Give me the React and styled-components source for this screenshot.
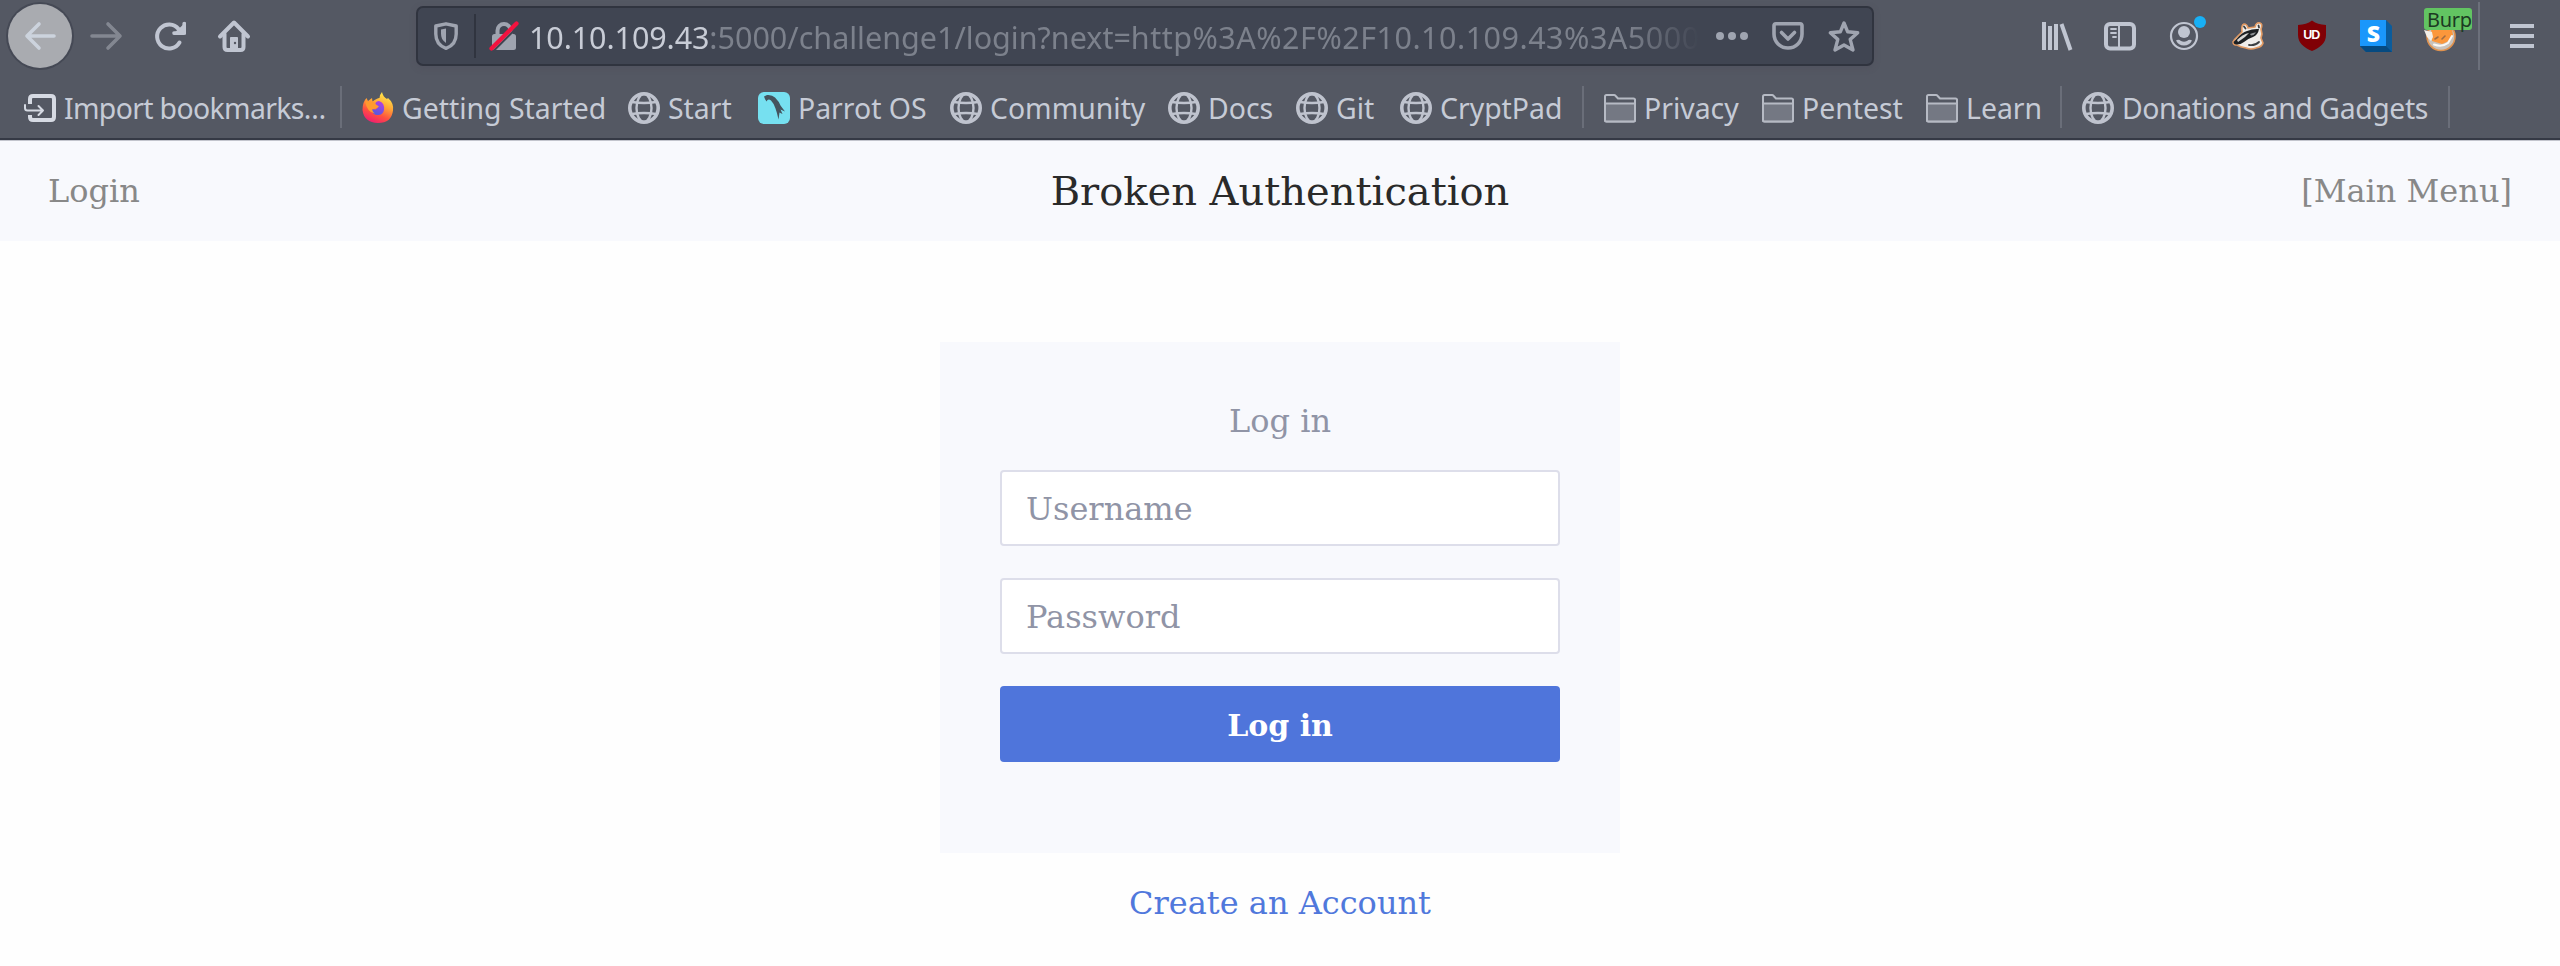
import React from "react";
import styled, { createGlobalStyle, css } from "styled-components";

const GlobalStyle = createGlobalStyle`
  * { box-sizing: border-box; }
  body { margin: 0; background: #fefefe; }
`;

const ui = '"Noto Sans", "Open Sans", sans-serif';
const serif = '"DejaVu Serif", serif';

const Window = styled.div`
  width: 2560px;
  height: 966px;
  overflow: hidden;
  display: flex;
  flex-direction: column;
  background: #fefefe;
`;

const Chrome = styled.header`
  height: 140px;
  background: #545863;
  border-bottom: 2px solid #353945;
  box-shadow: 0 1px 0 #c3c5cd;
  position: relative;
  font-family: ${ui};
  color: #c6cbd6;
`;

const Toolbar = styled.div`
  height: 72px;
  display: flex;
  align-items: center;
  padding-left: 8px;
`;

const Glyph = styled.svg`
  width: 32px;
  height: 32px;
  flex: none;
  display: block;
  overflow: visible;
  fill: none;
  stroke: currentColor;
  stroke-width: 2;
  stroke-linecap: round;
  stroke-linejoin: round;
`;

const BackButton = styled.button`
  width: 64px;
  height: 64px;
  border: 0;
  padding: 0;
  border-radius: 50%;
  background: #a9abb0;
  box-shadow: 0 0 0 2px #454955;
  color: #ccd3dd;
  display: flex;
  align-items: center;
  justify-content: center;
`;

const NavGroup = styled.div`
  display: flex;
  gap: 32px;
  margin-left: ${(p) => p.$before}px;
  color: #c0c5d1;
`;

const Dimmed = styled.div`
  color: #838791;
`;

const UrlBar = styled.div`
  width: 1458px;
  height: 60px;
  margin-left: 166px;
  display: flex;
  align-items: center;
  padding-left: 12px;
  background: #404552;
  border: 2px solid #30343f;
  border-radius: 7px;
  box-shadow: 0 2px 6px rgba(74, 66, 82, 0.25);
  color: #9fa4b0;
`;

const UrlDivider = styled.div`
  width: 2px;
  height: 44px;
  margin: 0 12px;
  background: #30343f;
`;

const UrlText = styled.div`
  width: 1171px;
  margin-left: 9px;
  padding-top: 2px;
  overflow: hidden;
  white-space: nowrap;
  font-size: 30.5px;
  line-height: 44px;
  color: #7c818c;
  mask-image: linear-gradient(to right, #000 1100px, transparent 1170px);
`;

const UrlHost = styled.span`
  color: #c8ccd6;
  letter-spacing: -0.1px;
`;

const UrlQuery = styled.span`
  letter-spacing: 0.5px;
`;

const UrlActions = styled.div`
  display: flex;
  gap: 24px;
  margin-left: 16px;
`;

const MenuDivider = styled.div`
  width: 2px;
  height: 68px;
  margin-left: 22px;
  background: #6c707b;
`;

const BadgeAnchor = styled.div`
  position: relative;
`;

const Badge = styled.span`
  position: absolute;
  left: 0;
  top: -12px;
  width: 48px;
  height: 22px;
  padding-left: 3px;
  border-radius: 3px;
  background: #62c462;
  color: #1c3a22;
  font: 20px/23px ${ui};
  letter-spacing: -0.3px;
`;

const BookmarksBar = styled.nav`
  height: 66px;
  display: flex;
  align-items: center;
  padding: 6px 0 0 24px;
  font-size: 28.4px;
  line-height: 38px;
`;

const Bookmark = styled.div`
  width: ${(p) => p.$w}px;
  flex: none;
  display: flex;
  align-items: center;
  gap: 8px;
  white-space: nowrap;
  letter-spacing: ${(p) => p.$track || 0}px;
`;

const BarDivider = styled.div`
  width: 2px;
  height: 42px;
  margin: -2px 20px 0 0;
  background: #6a6e79;
`;

const SiteHeader = styled.div`
  height: 101px;
  display: grid;
  grid-template-columns: 1fr auto 1fr;
  align-items: center;
  padding: 0 48px;
  background: #f8f9fd;
  font-family: ${serif};
`;

const SiteLink = styled.a`
  font-size: 32px;
  line-height: 40px;
  color: #888;
  justify-self: ${(p) => (p.$end ? "end" : "start")};
`;

const SiteTitle = styled.h1`
  margin: 0;
  font-size: 40px;
  line-height: 48px;
  font-weight: 400;
  color: #2a2a2a;
`;

const Main = styled.main`
  display: flex;
  flex-direction: column;
  align-items: center;
  padding-top: 101px;
  font-family: ${serif};
`;

const Card = styled.form`
  width: 680px;
  height: 511px;
  padding: 59px 60px 0;
  display: flex;
  flex-direction: column;
  background: #f8f9fd;
`;

const CardTitle = styled.h2`
  margin: 0 0 29px;
  font-size: 32px;
  line-height: 40px;
  font-weight: 400;
  text-align: center;
  color: #9094a6;
`;

const control = css`
  width: 100%;
  height: 76px;
  border-radius: 4px;
  font-family: ${serif};
`;

const Field = styled.input`
  ${control}
  margin: 0 0 32px;
  padding: 1px 24px 0;
  border: 2px solid #dddeea;
  background: #fff;
  font-size: 32px;
  &::placeholder {
    color: #9094a6;
    opacity: 1;
  }
`;

const Submit = styled.button`
  ${control}
  padding: 2px 0 0;
  border: 0;
  background: #4f75db;
  color: #fff;
  font-size: 30px;
  font-weight: 700;
`;

const AccountLink = styled.a`
  margin-top: 28px;
  font-size: 32px;
  line-height: 44px;
  color: #5078dc;
`;

const Icon = ({ children }) => <Glyph viewBox="0 0 32 32">{children}</Glyph>;

const Back = () => (
  <Icon><path d="M30 16H3M15 4 3 16l12 12" strokeWidth="3.6" /></Icon>
);
const Forward = () => (
  <Icon><path d="M2 16h27M18 4l12 12-12 12" strokeWidth="3.6" /></Icon>
);
const Reload = () => (
  <Icon>
    <path d="M25.5 22.5A12 12 0 1 1 24.5 9" strokeWidth="4" />
    <path d="M32 2v12.5H18.5z" fill="currentColor" stroke="none" />
    <path d="M30.2 3.5v9.6H20" strokeWidth="3.6" />
  </Icon>
);
const Home = () => (
  <Icon>
    <path d="M2 16.5 16 2.5l14 14" strokeWidth="4" />
    <path d="M6.5 14v13q0 3 3 3h13q3 0 3-3V14" strokeWidth="4" />
    <path d="M12.5 30V17.5h7V30z" fill="currentColor" strokeWidth="1" />
    <circle cx="17" cy="23" r="1.2" fill="#545863" stroke="none" />
  </Icon>
);
const Shield = () => (
  <Icon>
    <path d="M16 3.8 26.2 6v8c0 7-3.6 12-10.2 14.4C9.4 26 5.8 21 5.8 14V6z" strokeWidth="3.4" />
    <path d="M16 8.5v14.5c-3.6-2.3-5-5.5-5-9.5V9.5z" fill="currentColor" stroke="none" />
  </Icon>
);
const Lock = () => (
  <Icon>
    <rect x="4" y="14" width="24" height="16" rx="2.5" fill="currentColor" stroke="none" />
    <path d="M9.5 15v-4.500a6.500 6.500 0 0 1 13 0V15" strokeWidth="4" />
    <path d="M6 30.500 30 6.500" stroke="#404552" strokeWidth="2" />
    <path d="M3.500 28.500 28.500 3.500" stroke="#f3123f" strokeWidth="4.200" />
  </Icon>
);
const Dots = () => (
  <Icon>
    <g fill="currentColor" stroke="none">
      <circle cx="4" cy="16" r="4" />
      <circle cx="16" cy="16" r="4" />
      <circle cx="28" cy="16" r="4" />
    </g>
  </Icon>
);
const Pocket = () => (
  <Icon>
    <path d="M4 3.8h24q2 0 2 2V14a14 14 0 0 1-28 0V5.8q0-2 2-2z" strokeWidth="3.6" />
    <path d="m9.5 12.5 6.5 6.5 6.5-6.5" strokeWidth="3.6" />
  </Icon>
);
const Star = () => (
  <Icon>
    <path d="m16 3 3.7 8.800 10 1-7.500 6.600 2.800 10.600-9-5-9 5 2.800-10.600L2.300 12.800l10-1z" strokeWidth="3.4" />
  </Icon>
);
const Library = () => (
  <Icon>
    <g strokeLinecap="butt" strokeWidth="4">
      <path d="M4 2v28M10 6v24M16 4v26" />
      <path d="m21.500 4 9 26" />
    </g>
  </Icon>
);
const Sidebar = () => (
  <Icon>
    <rect x="2" y="4" width="28" height="24.5" rx="4" strokeWidth="4" />
    <path d="M15 4v24" strokeWidth="2" />
    <path d="M7 9h5M7 13h5M9 17h3" strokeWidth="1.8" />
  </Icon>
);
const Account = () => (
  <Icon>
    <circle cx="16" cy="16" r="13" strokeWidth="2.2" />
    <circle cx="16" cy="12" r="6" fill="currentColor" stroke="none" />
    <path d="M8 20.500c2-1.200 3.500-.5 5 .5q3 1.500 6 0c1.500-1 3-1.700 5-.5q-2.500 5-8 5t-8-5z" fill="currentColor" stroke="none" />
    <circle cx="32" cy="2" r="6" fill="#18b0f5" stroke="none" />
  </Icon>
);
const Badger = () => (
  <Icon>
    <path d="M1 22 3 19 10 12Q9 5 12 4q3 0 4 4l7-1q1-5 5-4 3 1 1 6l1 5-1 4 2 5q-1 4-7 5-5 2-10 0-6-1-9-3-4 0-4-3z" fill="#efedea" stroke="#e29a63" strokeWidth="1.6" />
    <path d="M1.500 22 4 19.500Q10 12 15 11q6-2.500 12-2-1 6-6 8-6 2-9 5-4 3-8 2.500Q1.500 24 1.500 22z" fill="#1d2023" stroke="none" />
    <path d="M5 20q6-6 12-7l-4 4-7 5z" fill="#d9d8d6" stroke="none" />
    <path d="M18 14q4-2 6-1.500-2 3-5 3z" fill="#8d9093" stroke="none" />
    <path d="m12 6.500 1.500 2M26.500 5.500l.5 2M17 25q6 1 10-3" stroke="#3b3e41" strokeWidth="1.800" />
  </Icon>
);
const UShield = () => (
  <Icon>
    <path d="M16 .5c4 3 8 4 14 4.500V15c0 8-6 12.500-14 16C8 27.500 2 23 2 15V5C8 4.500 12 3.500 16 .5z" fill="#800005" stroke="none" />
    <text x="15.2" y="19.4" textAnchor="middle" fontFamily="Liberation Sans, sans-serif" fontWeight="700" fontSize="12.5" letterSpacing="-1" fill="#fff" stroke="none">UD</text>
  </Icon>
);
const SBlock = () => (
  <Icon>
    <path d="M26 0 32 6V32H6L0 26z" fill="#0b5c9c" stroke="none" />
    <path d="M0 26h26l6 6H6z" fill="#064a80" stroke="none" />
    <path d="M0 0h26v26H0z" fill="#1a97fb" stroke="none" />
    <text x="13.3" y="21.5" textAnchor="middle" fontFamily="Open Sans, sans-serif" fontWeight="800" fontSize="23" fill="#fff" stroke="none">S</text>
  </Icon>
);
const Fox = () => (
  <Icon>
    <circle cx="17" cy="16.500" r="14" fill="#c9c3bd" stroke="#e0924e" strokeWidth="1.600" />
    <path d="M7 9h21l1 6-4 6-7 3-10-3z" fill="#fb973c" stroke="none" />
    <path d="m0 10 8 2 1 5-2 4-4-4z" fill="#f3efe9" stroke="none" />
    <path d="m11 19 3-2M18 19l3-3" stroke="#a06c42" strokeWidth="1.600" />
    <path d="M10 24.500q8 3 14-1.500l4-7" stroke="#fbf8f4" strokeWidth="2" />
  </Icon>
);
const Menu = () => (
  <Icon>
    <path d="M4 6h24M4 16h24M4 26h24" strokeWidth="4" strokeLinecap="butt" />
  </Icon>
);
const Import = () => (
  <Icon>
    <g stroke="#d6dae3">
      <path d="M6 12V7q0-3 3-3h18q3 0 3 3v18q0 3-3 3H9q-3 0-3-3v-2" strokeWidth="4" strokeLinecap="butt" />
      <path d="M1 13v3q0 2.500 2.500 2.500H19M14.500 14l4.500 4.500-4.500 4.500" strokeWidth="2" />
    </g>
  </Icon>
);
const Globe = () => (
  <Icon>
    <g stroke="#bfc3ce">
      <circle cx="16" cy="16" r="14.2" strokeWidth="3.6" />
      <ellipse cx="16" cy="16" rx="7.5" ry="14" strokeWidth="2.4" />
      <path d="M4 10q12 2 24 0M4 22q12-2 24 0" strokeWidth="2.4" />
    </g>
  </Icon>
);
const Folder = () => (
  <Icon>
    <path d="M1 4.500Q1 3 2.500 3H10q1 0 1.700 1L14 6.500h15.500Q31 6.500 31 8v20q0 1.500-1.500 1.500h-27Q1 29.500 1 28z" stroke="#b6bac4" fill="#545863" />
    <path d="M1.500 11.500h29V28.500h-29z" fill="#747883" stroke="none" />
    <path d="M1 11.500h30M1 8v20q0 1.500 1.500 1.500h27Q31 29.500 31 28V8" stroke="#b6bac4" />
  </Icon>
);
const Parrot = () => (
  <Icon>
    <rect width="32" height="32" rx="6" fill="#76e0f0" stroke="none" />
    <path d="M6 4.500 9 3q5-.5 8 2.500 4 4 5.500 8l4.500 6-4.500-2 2 4.500-3-1.500-1 7q-1.500-7-3-11-1.500-5-4.500-8-2-1.500-3.500-.5l-1 1.500Q6.500 6.500 6 4.500z" fill="#44545e" stroke="none" />
  </Icon>
);
const Firefox = () => (
  <Icon>
    <defs>
      <linearGradient id="flame" x1=".75" y1="0" x2=".3" y2="1">
        <stop offset="0" stopColor="#fff24d" />
        <stop offset=".4" stopColor="#ffa436" />
        <stop offset=".7" stopColor="#ff5040" />
        <stop offset="1" stopColor="#ee1b72" />
      </linearGradient>
      <linearGradient id="core" x1=".8" y1="0" x2=".3" y2="1">
        <stop offset="0" stopColor="#b83ee0" />
        <stop offset="1" stopColor="#4f5be0" />
      </linearGradient>
    </defs>
    <path d="M20 0q1 5 5 7l1-1q6 5 5 12.500Q29.500 31 16 31 2 30.500 .5 18 .500 10 4.500 6l1.500 3 4-3 .5 3.500Q15 6 17.500 6 18 2 20 0z" fill="url(#flame)" stroke="none" />
    <path d="M17 9q6 2 5 9-1 5-6 5-6 0-6.500-6l4 .5 2.500-2q-2-1.500-3-3.500 1-3 4-3z" fill="url(#core)" stroke="none" />
    <path d="M3 9q4 1 8 .5 2 .5 3 3l3 2-3.500 2-3.500 1q1 3 3 4-8-1-10-12.500z" fill="#ff9a2e" stroke="none" />
  </Icon>
);

export default function App() {
  return (
    <Window>
      <GlobalStyle />
      <Chrome>
        <Toolbar>
          <BackButton><Back /></BackButton>
          <NavGroup $before={18}>
            <Dimmed><Forward /></Dimmed>
            <Reload />
            <Home />
          </NavGroup>
          <UrlBar>
            <Shield />
            <UrlDivider />
            <Lock />
            <UrlText>
              <UrlHost>10.10.109.43</UrlHost>:5000/challenge1/login?next=<UrlQuery>http%3A%2F%2F10.10.109.43%3A5000</UrlQuery>
            </UrlText>
            <UrlActions>
              <Dots />
              <Pocket />
              <Star />
            </UrlActions>
          </UrlBar>
          <NavGroup $before={166}>
            <Library />
            <Sidebar />
            <Account />
            <Badger />
            <UShield />
            <SBlock />
            <BadgeAnchor>
              <Fox />
              <Badge>Burp</Badge>
            </BadgeAnchor>
          </NavGroup>
          <MenuDivider />
          <NavGroup $before={26}>
            <Menu />
          </NavGroup>
        </Toolbar>
        <BookmarksBar>
          <Bookmark $w={316} $track={-0.65}><Import />Import bookmarks…</Bookmark>
          <BarDivider />
          <Bookmark $w={266}><Firefox />Getting Started</Bookmark>
          <Bookmark $w={130}><Globe />Start</Bookmark>
          <Bookmark $w={192}><Parrot />Parrot OS</Bookmark>
          <Bookmark $w={218}><Globe />Community</Bookmark>
          <Bookmark $w={128}><Globe />Docs</Bookmark>
          <Bookmark $w={104}><Globe />Git</Bookmark>
          <Bookmark $w={182}><Globe />CryptPad</Bookmark>
          <BarDivider />
          <Bookmark $w={158}><Folder />Privacy</Bookmark>
          <Bookmark $w={164}><Folder />Pentest</Bookmark>
          <Bookmark $w={134}><Folder />Learn</Bookmark>
          <BarDivider />
          <Bookmark $w={366} $track={-0.4}><Globe />Donations and Gadgets</Bookmark>
          <BarDivider />
        </BookmarksBar>
      </Chrome>
      <SiteHeader>
        <SiteLink>Login</SiteLink>
        <SiteTitle>Broken Authentication</SiteTitle>
        <SiteLink $end>[Main Menu]</SiteLink>
      </SiteHeader>
      <Main>
        <Card>
          <CardTitle>Log in</CardTitle>
          <Field placeholder="Username" />
          <Field placeholder="Password" />
          <Submit type="button">Log in</Submit>
        </Card>
        <AccountLink>Create an Account</AccountLink>
      </Main>
    </Window>
  );
}
